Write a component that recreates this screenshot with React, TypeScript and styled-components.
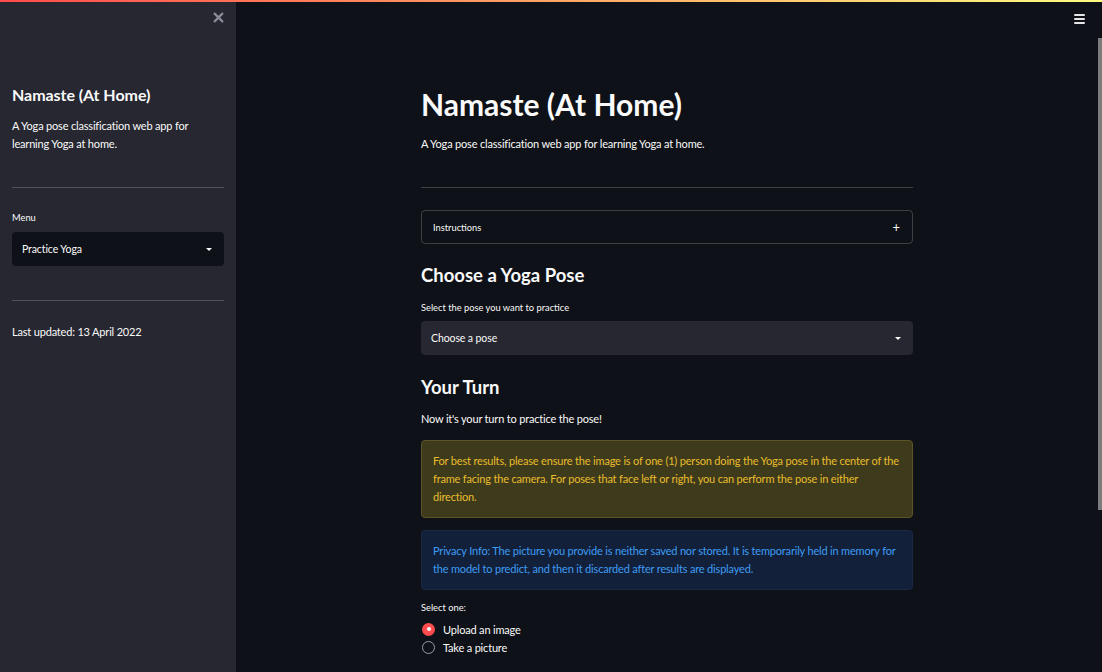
import React from "react";
import styled, { createGlobalStyle } from "styled-components";

const Global = createGlobalStyle`
  html, body { margin: 0; padding: 0; height: 100%; overflow: hidden; background: #0e1117; }
  #root { height: 100%; }
  * { box-sizing: border-box; }
  body { font-family: Lato, "Noto Sans", sans-serif; color: #fafafa; }
`;

const Page = styled.div`
  position: relative;
  display: flex;
  width: 1102px;
  height: 672px;
  background: #0e1117;
`;

const Decoration = styled.div`
  position: absolute;
  top: 0;
  left: 0;
  right: 0;
  height: 2px;
  background: linear-gradient(90deg, #ff4b4b, #fffd80);
  z-index: 5;
`;

const Sidebar = styled.aside`
  width: 236px;
  flex: none;
  height: 100%;
  background: #262730;
  padding: 0 12px;
  display: flex;
  flex-direction: column;
`;

const SidebarHeader = styled.div`
  height: 34px;
  display: flex;
  justify-content: flex-end;
  align-items: center;
  padding-top: 1px;
`;

const CloseButton = styled.div`
  width: 16px;
  height: 16px;
  margin-right: -2px;
  display: flex;
  align-items: center;
  justify-content: center;
  color: #8b8c96;
`;

const SideTitle = styled.h1`
  margin: 49px 0 0;
  font-size: 16px;
  line-height: 24px;
  font-weight: 700;
  letter-spacing: -0.05px;
`;

const Text = styled.p<{ $mt?: number }>`
  margin: ${(p) => p.$mt ?? 0}px 0 0;
  font-size: 11px;
  line-height: 18px;
  font-weight: 400;
  letter-spacing: -0.18px;
`;

const Divider = styled.hr<{ $mt: number }>`
  margin: ${(p) => p.$mt}px 0 0;
  border: none;
  border-top: 1px solid rgba(250, 250, 250, 0.2);
  height: 0;
`;

const Label = styled.div<{ $mt: number }>`
  margin-top: ${(p) => p.$mt}px;
  font-size: 9.3px;
  line-height: 14px;
`;

const SelectBox = styled.div<{ $dark?: boolean; $mt: number }>`
  margin-top: ${(p) => p.$mt}px;
  height: 34px;
  border-radius: 4px;
  background: ${(p) => (p.$dark ? "#0e1117" : "#262730")};
  display: flex;
  align-items: center;
  justify-content: space-between;
  padding: 0 10px 0 10px;
  font-size: 10.5px;
  letter-spacing: -0.1px;
`;

const Caret = styled.span`
  width: 0;
  height: 0;
  border-left: 3px solid transparent;
  border-right: 3px solid transparent;
  border-top: 3px solid #fafafa;
  margin-right: 2px;
`;

const Main = styled.main`
  flex: 1;
  height: 100%;
  position: relative;
  display: flex;
  justify-content: center;
`;

const Column = styled.div`
  width: 492px;
  margin-left: -4px;
  display: flex;
  flex-direction: column;
`;

const Title = styled.h1`
  margin: 84px 0 0;
  font-size: 30px;
  line-height: 40px;
  font-weight: 700;
`;

const Heading = styled.h2<{ $mt: number }>`
  margin: ${(p) => p.$mt}px 0 0;
  font-size: 18.5px;
  line-height: 30px;
  font-weight: 700;
`;

const Expander = styled.div`
  margin-top: 22px;
  height: 34px;
  border: 1px solid rgba(250, 250, 250, 0.2);
  border-radius: 4px;
  display: flex;
  align-items: center;
  justify-content: space-between;
  padding: 0 11px;
  font-size: 9.3px;
`;

const Plus = styled.span`
  font-size: 13px;
  line-height: 1;
  margin-right: 1px;
`;

const Alert = styled.div<{ $kind: "warning" | "info"; $mt: number }>`
  margin-top: ${(p) => p.$mt}px;
  border-radius: 4px;
  padding: 11px 11px 11px;
  font-size: 11px;
  letter-spacing: -0.18px;
  line-height: 18px;
  background: ${(p) => (p.$kind === "warning" ? "#3e3a1c" : "#13203a")};
  border: 1px solid ${(p) => (p.$kind === "warning" ? "#5c5424" : "#1a2a45")};
  color: ${(p) => (p.$kind === "warning" ? "#e9bd2c" : "#3d9df3")};
`;

const RadioGroup = styled.div`
  margin-top: 5px;
  display: flex;
  flex-direction: column;
`;

const RadioRow = styled.div`
  display: flex;
  align-items: center;
  gap: 8px;
  height: 18px;
  font-size: 11px;
  letter-spacing: -0.18px;
`;

const RadioDot = styled.span<{ $checked?: boolean }>`
  width: 13px;
  height: 13px;
  border-radius: 50%;
  margin-left: 1px;
  display: flex;
  align-items: center;
  justify-content: center;
  background: ${(p) => (p.$checked ? "#ff4b4b" : "transparent")};
  border: ${(p) => (p.$checked ? "none" : "1.5px solid #9a9ba3")};
  &::after {
    content: "";
    width: 4px;
    height: 4px;
    border-radius: 50%;
    background: #fff;
    display: ${(p) => (p.$checked ? "block" : "none")};
  }
`;

const MenuButton = styled.div`
  position: absolute;
  top: 14px;
  right: 17px;
  width: 11px;
  display: flex;
  flex-direction: column;
  gap: 2px;
  span {
    height: 2px;
    background: #e6e6e6;
    border-radius: 1px;
  }
`;

const ScrollThumb = styled.div`
  position: absolute;
  top: 38px;
  right: 0;
  width: 4px;
  height: 472px;
  background: #7c7c7e;
`;

export default function App() {
  return (
    <>
      <Global />
      <Page>
        <Decoration />
        <Sidebar>
          <SidebarHeader>
            <CloseButton>
              <svg width="11" height="11" viewBox="0 0 10 10">
                <path d="M1.5 1.5 L8.5 8.5 M8.5 1.5 L1.5 8.5" stroke="currentColor" strokeWidth="2" strokeLinecap="round" />
              </svg>
            </CloseButton>
          </SidebarHeader>
          <SideTitle>Namaste (At Home)</SideTitle>
          <Text $mt={10}>
            A Yoga pose classification web app for
            <br />
            learning Yoga at home.
          </Text>
          <Divider $mt={34} />
          <Label $mt={23}>Menu</Label>
          <SelectBox $dark $mt={7}>
            <span>Practice Yoga</span>
            <Caret />
          </SelectBox>
          <Divider $mt={34} />
          <Text $mt={22}>Last updated: 13 April 2022</Text>
        </Sidebar>
        <Main>
          <MenuButton>
            <span />
            <span />
            <span />
          </MenuButton>
          <ScrollThumb />
          <Column>
            <Title>Namaste (At Home)</Title>
            <Text $mt={11}>A Yoga pose classification web app for learning Yoga at home.</Text>
            <Divider $mt={34} />
            <Expander>
              <span>Instructions</span>
              <Plus>+</Plus>
            </Expander>
            <Heading $mt={16}>Choose a Yoga Pose</Heading>
            <Label $mt={11}>Select the pose you want to practice</Label>
            <SelectBox $mt={6}>
              <span>Choose a pose</span>
              <Caret />
            </SelectBox>
            <Heading $mt={17}>Your Turn</Heading>
            <Text $mt={8}>Now it's your turn to practice the pose!</Text>
            <Alert $kind="warning" $mt={12}>
              For best results, please ensure the image is of one (1) person doing the Yoga pose in the center of the
              frame facing the camera. For poses that face left or right, you can perform the pose in either
              direction.
            </Alert>
            <Alert $kind="info" $mt={12}>
              Privacy Info: The picture you provide is neither saved nor stored. It is temporarily held in memory for
              the model to predict, and then it discarded after results are displayed.
            </Alert>
            <Label $mt={11}>Select one:</Label>
            <RadioGroup>
              <RadioRow>
                <RadioDot $checked />
                <span>Upload an image</span>
              </RadioRow>
              <RadioRow>
                <RadioDot />
                <span>Take a picture</span>
              </RadioRow>
            </RadioGroup>
          </Column>
        </Main>
      </Page>
    </>
  );
}
